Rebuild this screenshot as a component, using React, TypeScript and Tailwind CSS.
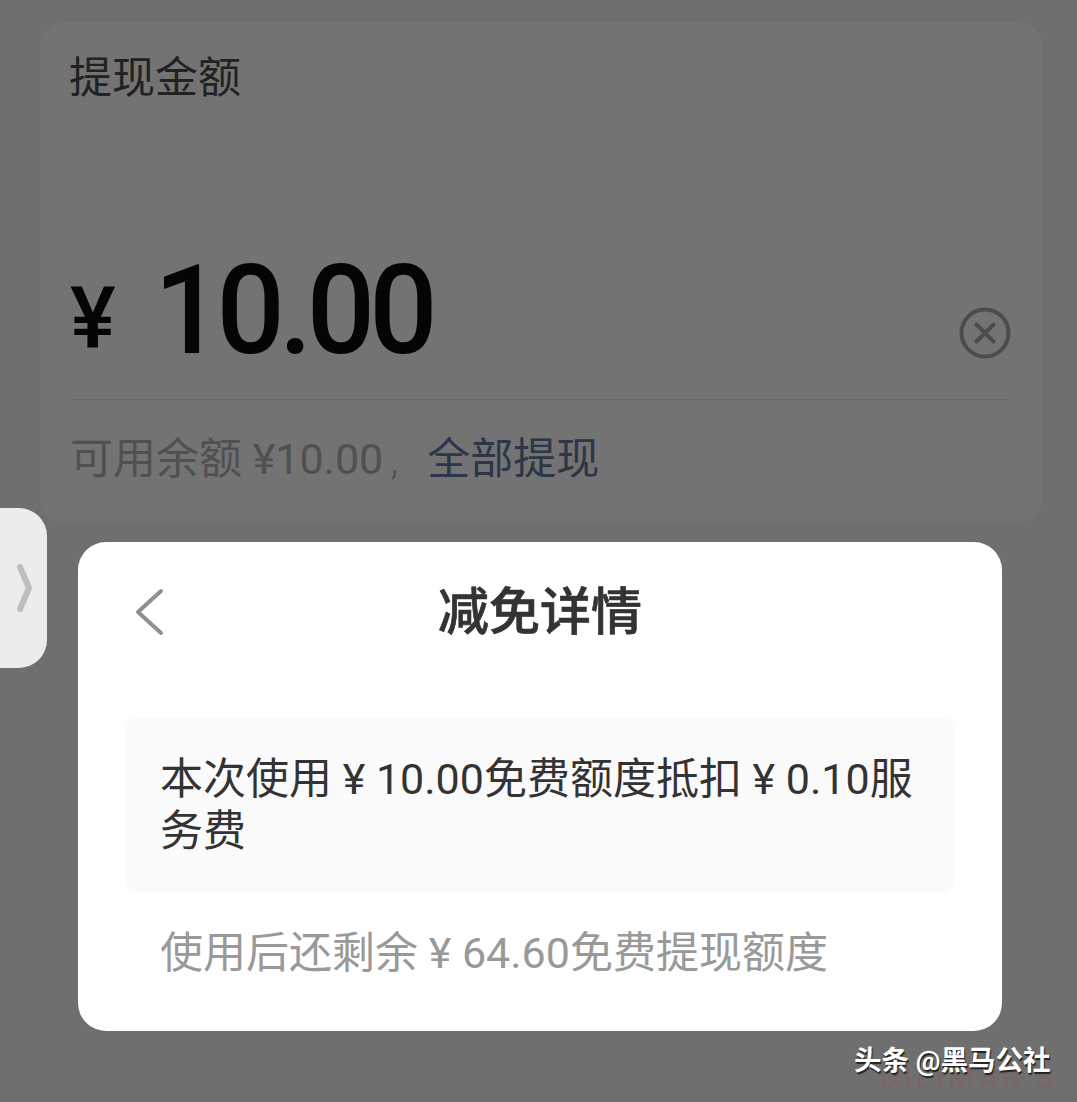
const cjk = "font-['Roboto','Noto_Sans_CJK_SC',sans-serif]";

function ClearIcon() {
  return (
    <svg width="52" height="52" viewBox="0 0 52 52" fill="none" stroke="#4c4c4c" strokeLinecap="round">
      <circle cx="26" cy="26" r="23.5" strokeWidth="4" />
      <path d="M17.5 17.5 34.5 34.5M34.5 17.5 17.5 34.5" strokeWidth="4" />
    </svg>
  );
}

function BackIcon() {
  return (
    <svg width="30" height="48" viewBox="0 0 30 48" fill="none" stroke="#8f8f8f" strokeWidth="4" strokeLinecap="round" strokeLinejoin="round">
      <path d="M26 3 3 24l23 21" />
    </svg>
  );
}

function SideArrow() {
  return (
    <svg width="16" height="48" viewBox="0 0 16 48" fill="none" stroke="#bdbdbd" strokeWidth="6" strokeLinecap="round" strokeLinejoin="round">
      <path d="M3 3 12 24 3 45" />
    </svg>
  );
}

export default function App() {
  return (
    <div className={`relative w-[1077px] h-[1102px] overflow-hidden bg-[#6f6f6f] pt-[22px] pl-[40px] pr-[35px] ${cjk}`}>
      <div className="h-[501px] rounded-[24px] bg-[#737373] pl-[30px] pr-[34px] flex flex-col">
        <div className="pt-[26px] -ml-[1px] text-[43px] leading-[60px] text-[#222222]">提现金额</div>
        <div className="mt-[94px] h-[198px] flex items-start border-b border-[#686868] relative">
          <span className="mt-[72px] w-[88px] text-[86px] leading-[90px] font-medium text-[#050505]">¥</span>
          <span className="-ml-[4px] mt-[24px] origin-left scale-x-[0.97] text-[124px] leading-[170px] tracking-[-6px] font-medium text-[#050505]">
            10.00
          </span>
          <div className="absolute right-[-3px] top-[105px]">
            <ClearIcon />
          </div>
        </div>
        <div className="mt-[29px] text-[43px] leading-[60px] text-[#505050]">
          可用余额 ¥10.00<span className="inline-block w-[44px] pl-[7px] font-light">,</span>
          <span className="text-[#2c3648]">全部提现</span>
        </div>
      </div>

      <div className="absolute left-0 top-[508px] w-[47px] h-[160px] rounded-r-[28px] bg-[#ececec] flex items-center pl-[17px]">
        <SideArrow />
      </div>

      <div className="absolute left-[78px] top-[542px] w-[924px] h-[489px] rounded-[28px] bg-white px-[47px]">
        <div className="relative h-[176px] pt-[38px] text-center text-[51px] leading-[66px] font-medium [-webkit-text-stroke:0.7px_#333333] text-[#333333]">
          减免详情
          <div className="absolute left-[10px] top-[46px]">
            <BackIcon />
          </div>
        </div>
        <div className="h-[174px] rounded-[12px] bg-[#fafafa] px-[35px] pt-[35px] text-[43px] leading-[52px] text-[#333333]">
          本次使用 ¥ 10.00免费额度抵扣 ¥ 0.10服务费
        </div>
        <div className="mt-[35px] pl-[35px] text-[43px] leading-[52px] text-[#999999]">
          使用后还剩余 ¥ 64.60免费提现额度
        </div>
      </div>

      <div className="absolute left-[880px] top-[1060px] text-[30px] leading-[36px] tracking-[4px] text-[#7d6565] whitespace-nowrap">
        DILIMAR S
      </div>
      <div className="absolute left-[854px] top-[1043px] text-[27.5px] leading-[36px] font-bold text-white [text-shadow:1px_2px_1px_#222222] whitespace-nowrap">
        头条 @黑马公社
      </div>
    </div>
  );
}
